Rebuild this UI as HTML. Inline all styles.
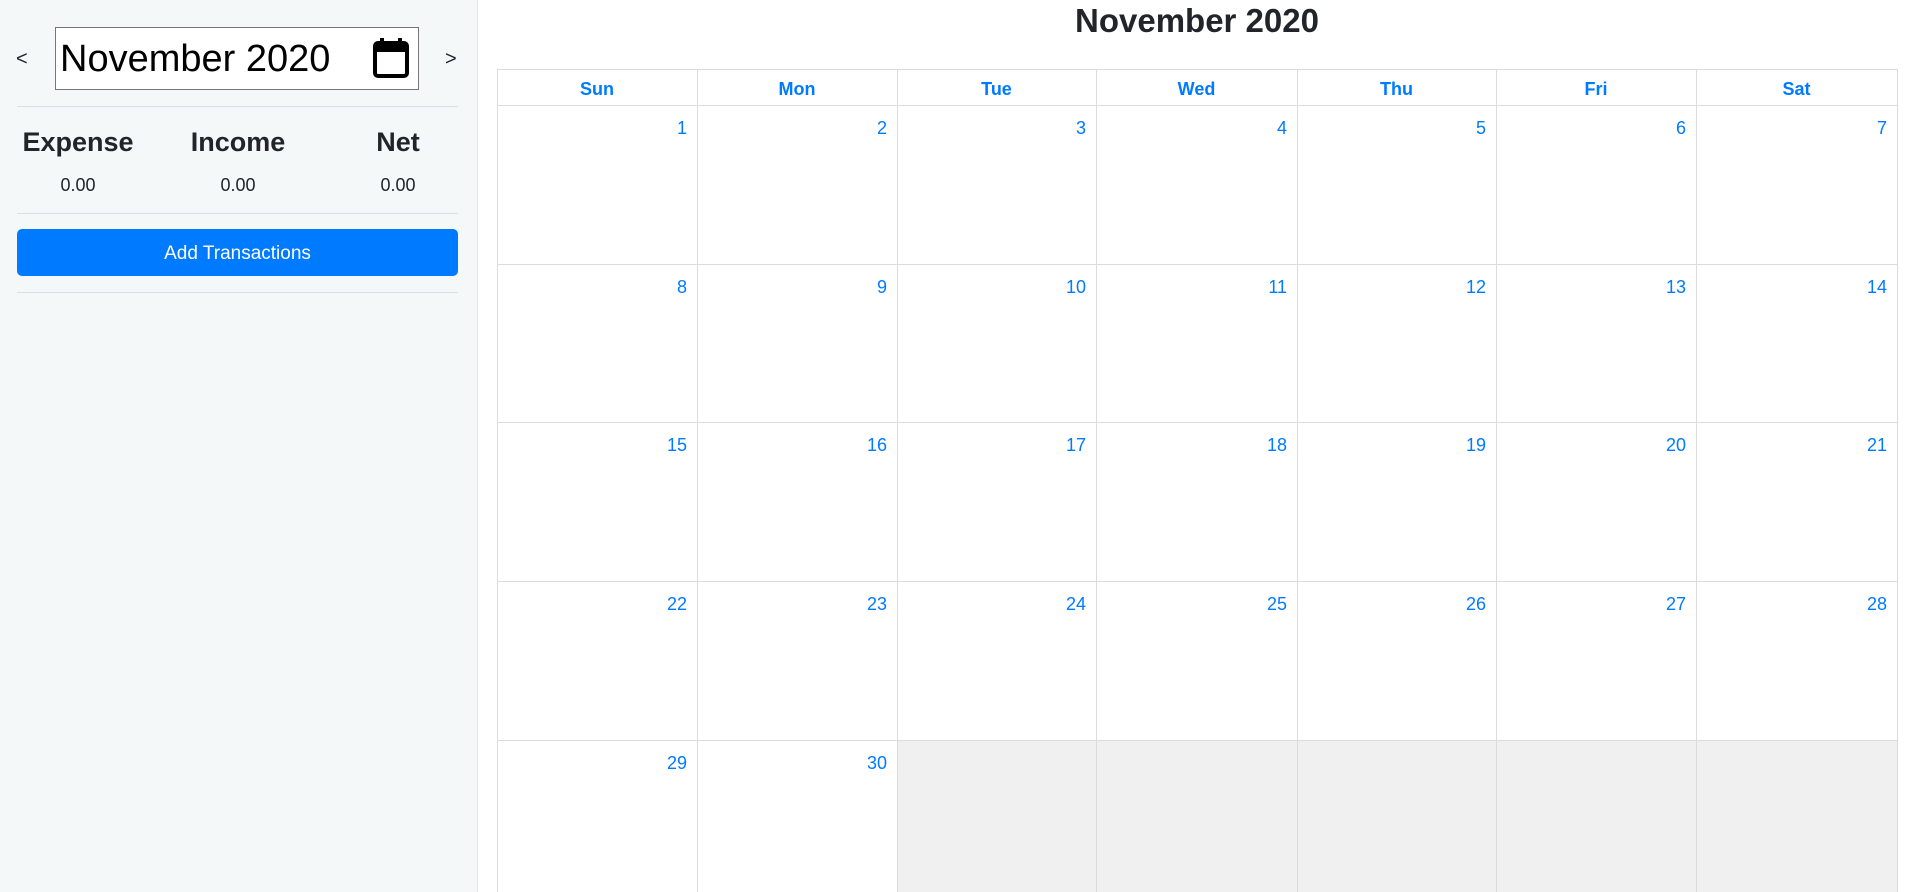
<!DOCTYPE html>
<html><head><meta charset="utf-8"><style>
*{box-sizing:border-box;margin:0;padding:0}
body{width:1916px;height:892px;overflow:hidden;background:#fff;font-family:"Liberation Sans",sans-serif;color:#212529;position:relative}
.side{position:absolute;left:0;top:0;width:478px;height:892px;background:#f5f8f9;border-right:1px solid #e3e6e8}
.abs{position:absolute}
.hr{position:absolute;left:17px;width:441px;height:1px;background:#dcdfe1}
.input{left:55px;top:27px;width:364px;height:63px;border:1px solid #767676;background:#fff}
.h{font-size:27px;font-weight:bold;color:#212529;text-align:center;width:140px}
.v{font-size:18px;text-align:center;width:140px}
.btn{left:17px;top:229px;width:441px;height:47px;background:#007bff;border-radius:5px;color:#fff;font-size:19px;text-align:center;line-height:49px}
.title{left:478px;width:1438px;top:2px;text-align:center;font-size:33px;font-weight:bold;color:#212529}
.hd{position:absolute;top:69px;height:36px;line-height:40px;text-align:center;color:#007bff;font-weight:bold;font-size:18px}
.cell{position:absolute;color:#007bff;font-size:18px;text-align:right;padding:13px 10px 0 0}
.vl{position:absolute;width:1px;background:#dcdcdc;top:69px;height:823px}
.hl{position:absolute;height:1px;background:#dcdcdc;left:497px;width:1401px}
.grey{position:absolute;background:#f0f0f0;top:740px;height:152px}
</style></head><body>
<div class="side">
<div class="abs" style="left:16px;top:48px;font-size:20px">&lt;</div>
<div class="abs input"><div class="abs" style="left:4px;top:10px;font-size:38px;color:#000">November 2020</div>
<svg class="abs" style="left:317px;top:9px" width="36" height="42" viewBox="0 0 36 42"><rect x="2" y="6" width="32" height="33" rx="3" fill="none" stroke="#000" stroke-width="4"/><rect x="2" y="6" width="32" height="9" fill="#000"/><rect x="7" y="1" width="4" height="8" fill="#000"/><rect x="25" y="1" width="4" height="8" fill="#000"/></svg>
</div>
<div class="abs" style="left:445px;top:48px;font-size:20px">&gt;</div>
<div class="hr" style="top:106px"></div>
<div class="abs h" style="left:8px;top:127px">Expense</div>
<div class="abs h" style="left:168px;top:127px">Income</div>
<div class="abs h" style="left:328px;top:127px">Net</div>
<div class="abs v" style="left:8px;top:175px">0.00</div>
<div class="abs v" style="left:168px;top:175px">0.00</div>
<div class="abs v" style="left:328px;top:175px">0.00</div>
<div class="hr" style="top:213px"></div>
<div class="abs btn">Add Transactions</div>
<div class="hr" style="top:292px"></div>
</div>
<div class="abs title">November 2020</div>
<div class="grey" style="left:897px;width:1000px"></div>
<div id="g"></div>
<script>
var xs=[497,697,897,1096,1297,1496,1696,1897],ys=[105,264,422,581,740,900];
var days=["Sun","Mon","Tue","Wed","Thu","Fri","Sat"],h="";
for(var i=0;i<8;i++)h+='<div class="vl" style="left:'+xs[i]+'px"></div>';
h+='<div class="hl" style="top:69px"></div>';
for(var j=0;j<5;j++)h+='<div class="hl" style="top:'+ys[j]+'px"></div>';
for(var i=0;i<7;i++)h+='<div class="hd" style="left:'+xs[i]+'px;width:'+(xs[i+1]-xs[i])+'px">'+days[i]+'</div>';
var d=1;for(var r=0;r<5;r++)for(var c=0;c<7;c++){if(d<=30)h+='<div class="cell" style="left:'+xs[c]+'px;top:'+ys[r]+'px;width:'+(xs[c+1]-xs[c])+'px">'+d+'</div>';d++;}
document.getElementById('g').innerHTML=h;
</script>
</body></html>
